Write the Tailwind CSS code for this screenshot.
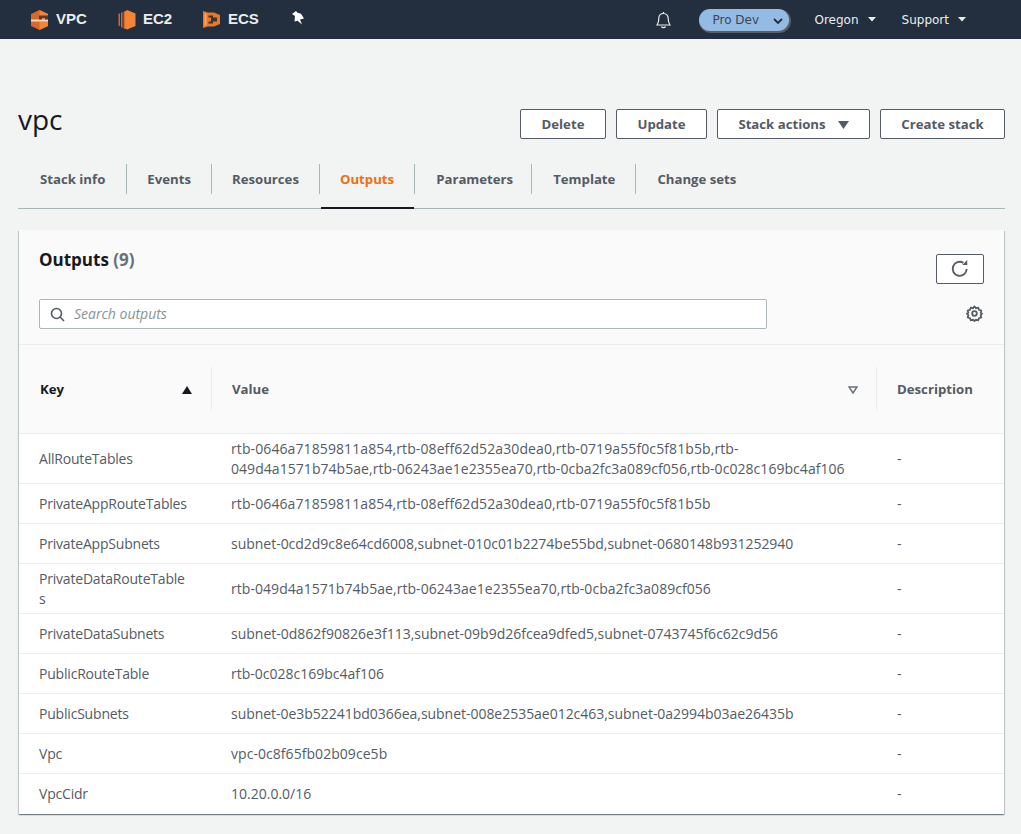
<!DOCTYPE html>
<html lang="en">
<head>
    <meta charset="UTF-8">
    <title>vpc - Outputs</title>
    <script src="https://cdn.jsdelivr.net/npm/@tailwindcss/browser@4"></script>
</head>
<body class="h-[834px] overflow-hidden bg-[#f2f3f3] font-['Open_Sans',sans-serif] text-[14px] text-[#545b64]">
    <!-- top nav -->
    <nav class="h-[39px] bg-[#232f3e] flex items-center pl-[31px] pr-[55px] font-['Liberation_Sans',sans-serif]">
        <a class="flex items-center gap-[8px] font-bold text-[15px] text-[#eaeded] w-[87px]">
            <svg width="17" height="20" viewBox="0 0 17 20"><path d="M8.500 0 17 4V16L8.500 20 0 16V4Z" fill="#d9672a"/><path d="M8.500 0 17 4V9.500H8.500ZM8.500 11.500H17V16L8.500 20Z" fill="#f58536"/><path d="M0 9.500H17V11.500H0Z" fill="#f8d9bd"/><path d="M8 9.500V5.500H17V9.500H14V8H11V9.500Z" fill="#4a3f3c"/></svg>
            VPC
        </a>
        <a class="flex items-center gap-[7px] font-bold text-[15px] text-[#eaeded] w-[85px]">
            <svg width="18" height="20" viewBox="0 0 18 20"><path d="M7 1.500 9 0 17.500 3.500V16L9 19.500 7 18.500Z" fill="#f58536"/><path d="M.5 4 2 3.300V16.300L.5 15.500ZM3 2.800 4.500 2V18L3 17ZM5.500 1.700 7 1V19L5.500 18.300Z" fill="#d9672a"/></svg>
            EC2
        </a>
        <a class="flex items-center gap-[8px] font-bold text-[15px] text-[#eaeded] w-[89px]">
            <svg width="17" height="17" viewBox="0 0 17 17"><path d="M0 0 5 1.500H11L17 4V13L11 15.500 5 15.500 0 17Z" fill="#e8782a"/><path d="M1.500 2.500H3.500V14.500H1.500Z" fill="#f6a96b"/><path d="M5.500 4.500H10V6.500H14V10.500H10V12.500H5.500V10.500H8V6.500H5.500Z" fill="#3b3431"/></svg>
            ECS
        </a>
        <svg width="12" height="14" viewBox="0 0 12 14" class="-mt-[4px]"><path d="M0 3 4 0 5.500 1.700 9 2.800 12 7.500 8 8.500 10 13.500 5.500 9.800 2.500 10.500 3 5Z" fill="#fff"/></svg>
        <span class="ml-auto flex items-center">
            <svg width="17" height="18" viewBox="0 0 17 18" fill="none" stroke="#eaeded" stroke-width="1.200" class="mr-[27px]"><path d="M2 14C3.500 12 3.800 10.500 3.800 7.500 3.800 4.500 5.800 2.500 8.500 2.500S13.200 4.500 13.200 7.500C13.200 10.500 13.500 12 15 14Z"/><path d="M8.500 1V2.500M6.500 15.500C7 17 10 17 10.500 15.500"/></svg>
            <span class="w-[90px] h-[22px] rounded-full bg-[#94bbe4] shadow-[1px_1px_0_1px_#5a5f66] flex items-center pl-[14px] font-['DejaVu_Sans',sans-serif] text-[12px] text-[#3b4654] relative mr-[26px]">
                Pro Dev
                <svg width="10" height="6" viewBox="0 0 10 6" fill="none" stroke="#232f3e" stroke-width="1.800" class="absolute right-[6px] top-[9px]"><path d="M1 1 5 5 9 1"/></svg>
            </span>
            <span class="flex items-center gap-[9px] font-['DejaVu_Sans',sans-serif] text-[12px] text-[#eaeded] mr-[26px]">Oregon
                <svg width="8" height="5" viewBox="0 0 8 5" fill="#eaeded"><path d="M0 0H8L4 4.500Z"/></svg></span>
            <span class="flex items-center gap-[9px] font-['DejaVu_Sans',sans-serif] text-[12px] text-[#eaeded]">Support
                <svg width="8" height="5" viewBox="0 0 8 5" fill="#eaeded"><path d="M0 0H8L4 4.500Z"/></svg></span>
        </span>
    </nav>

    <main class="pl-[18px] pr-[16px]">
        <!-- title and actions -->
        <div class="flex items-start justify-between pt-[70px] h-[125px]">
            <h1 class="text-[28px] leading-[36px] text-[#16191f] -mt-[8px]">vpc</h1>
            <div class="flex gap-[10px] font-bold text-[13.2px]">
                <button class="h-[30px] w-[86px] pt-[1px] rounded-[2px] border border-[#545b64] bg-white">Delete</button>
                <button class="h-[30px] w-[91px] pt-[1px] rounded-[2px] border border-[#545b64] bg-white">Update</button>
                <button class="h-[30px] w-[153px] pt-[1px] rounded-[2px] border border-[#545b64] bg-white flex items-center justify-center gap-[12px]">Stack actions
                    <svg width="11" height="8" viewBox="0 0 11 8" fill="#545b64"><path d="M0 0H11L5.500 8Z"/></svg></button>
                <button class="h-[30px] w-[125px] pt-[1px] rounded-[2px] border border-[#545b64] bg-white">Create stack</button>
            </div>
        </div>

        <!-- tabs -->
        <div class="flex h-[45px] items-start border-b border-[#aab7b8] font-bold text-[13.2px]">
            <a class="h-[30px] pt-[1px] flex items-center pl-[22px] pr-[21px] border-r border-[#aab7b8]">Stack info</a>
            <a class="h-[30px] pt-[1px] flex items-center px-[20px] border-r border-[#aab7b8]">Events</a>
            <a class="h-[30px] pt-[1px] flex items-center px-[20px] border-r border-[#aab7b8]">Resources</a>
            <a class="h-[44px] relative text-[#ec7211]"><span class="h-[30px] pt-[1px] flex items-center px-[20px]">Outputs</span><span class="absolute left-[1px] right-0 bottom-[-1px] h-[2px] bg-[#16191f]"></span></a>
            <a class="h-[30px] pt-[1px] flex items-center pl-[21px] pr-[18px] border-x border-[#aab7b8]">Parameters</a>
            <a class="h-[30px] pt-[1px] flex items-center pl-[21px] pr-[20px] border-r border-[#aab7b8]">Template</a>
            <a class="h-[30px] pt-[1px] flex items-center px-[21px]">Change sets</a>
        </div>

        <!-- outputs card -->
        <section class="mt-[21px] ml-[1px] mr-[1px] bg-white shadow-[0_1px_1px_0_rgba(0,28,36,.35),1px_1px_1px_0_rgba(0,28,36,.15),-1px_1px_1px_0_rgba(0,28,36,.15)]">
            <div class="h-[115px] bg-[#fafafa] border-b border-[#eaeded] px-[20px] relative">
                <h2 class="pt-[17px] text-[17px] leading-[26px] font-bold text-[#16191f]">Outputs <span class="text-[#687078]">(9)</span></h2>
                <button class="absolute right-[20px] top-[24px] h-[30px] w-[48px] rounded-[2px] border border-[#545b64] bg-white flex items-center justify-center">
                    <svg width="20" height="20" viewBox="0 0 18 18" fill="none" stroke="#545b64" stroke-width="1.700"><path d="M15 9A6.300 6.300 0 1 1 12 3.500"/><path d="M15.500 1V5.500H11" fill="#545b64" stroke="none"/></svg>
                </button>
                <div class="absolute left-[20px] top-[69px] w-[728px] h-[30px] rounded-[2px] border border-[#aab7b8] bg-white flex items-center pl-[10px] gap-[9px]">
                    <svg width="15" height="15" viewBox="0 0 15 15" fill="none" stroke="#545b64" stroke-width="1.600"><circle cx="6.500" cy="6.500" r="5"/><path d="M10 10 14 14"/></svg>
                    <span class="italic text-[#879596] -mt-[2px]">Search outputs</span>
                </div>
                <svg width="17" height="17" viewBox="0 0 17 17" fill="none" stroke="#545b64" stroke-width="1.800" class="absolute right-[21px] top-[75px]"><path d="M8.500 1.500 10 3.200 12.200 2.700 13 4.800 15.200 5.500 14.700 7.700 16 8.500 14.700 10.300 15.200 12.500 13 13.200 12.200 15.300 10 14.800 8.500 16 7 14.800 4.800 15.300 4 13.200 1.800 12.500 2.300 10.300 1 8.500 2.300 7.700 1.800 5.500 4 4.800 4.800 2.700 7 3.200Z"/><circle cx="8.500" cy="8.500" r="2.300"/></svg>
            </div>

            <div class="grid grid-cols-[193px_665px_1fr]">
                <!-- header -->
                <div class="h-[89px] pt-[1px] bg-[#fafafa] border-b border-[#eaeded] flex items-center pl-[21px] pr-[20px] justify-between relative font-bold text-[13.2px] text-[#16191f]">Key
                    <svg width="10" height="8" viewBox="0 0 10 8" fill="#16191f"><path d="M0 8H10L5 0Z"/></svg>
                    <span class="absolute right-0 top-[22px] h-[44px] w-px bg-[#eaeded]"></span>
                </div>
                <div class="h-[89px] pt-[1px] bg-[#fafafa] border-b border-[#eaeded] flex items-center pl-[20px] pr-[19px] justify-between relative font-bold text-[13.2px]">Value
                    <svg width="10" height="8" viewBox="0 0 10 8" fill="none" stroke="#687078" stroke-width="1.500"><path d="M1 1H9L5 7Z"/></svg>
                    <span class="absolute right-0 top-[22px] h-[44px] w-px bg-[#eaeded]"></span>
                </div>
                <div class="h-[89px] pt-[1px] bg-[#fafafa] border-b border-[#eaeded] flex items-center pl-[20px] font-bold text-[13.2px]">Description</div>

                <!-- rows -->
                <div class="h-[50px] border-b border-[#eaeded] flex items-center pl-[20px] tracking-[-.2px]">AllRouteTables</div>
                <div class="h-[50px] border-b border-[#eaeded] flex items-center pl-[19px] leading-[20px]"><span><span class="tracking-[.1px]">rtb-0646a71859811a854,rtb-08eff62d52a30dea0,rtb-0719a55f0c5f81b5b,rtb-</span><br><span class="tracking-[.05px]">049d4a1571b74b5ae,rtb-06243ae1e2355ea70,rtb-0cba2fc3a089cf056,rtb-0c028c169bc4af106</span></span></div>
                <div class="h-[50px] border-b border-[#eaeded] flex items-center pl-[20px]">-</div>

                <div class="h-[40px] border-b border-[#eaeded] flex items-center pl-[20px] tracking-[-.2px]">PrivateAppRouteTables</div>
                <div class="h-[40px] border-b border-[#eaeded] flex items-center pl-[19px] tracking-[.1px]">rtb-0646a71859811a854,rtb-08eff62d52a30dea0,rtb-0719a55f0c5f81b5b</div>
                <div class="h-[40px] border-b border-[#eaeded] flex items-center pl-[20px]">-</div>

                <div class="h-[40px] border-b border-[#eaeded] flex items-center pl-[20px] tracking-[-.2px]">PrivateAppSubnets</div>
                <div class="h-[40px] border-b border-[#eaeded] flex items-center pl-[19px] tracking-[-.02px]">subnet-0cd2d9c8e64cd6008,subnet-010c01b2274be55bd,subnet-0680148b931252940</div>
                <div class="h-[40px] border-b border-[#eaeded] flex items-center pl-[20px]">-</div>

                <div class="h-[50px] border-b border-[#eaeded] flex items-center pl-[20px] leading-[20px] tracking-[-.2px]"><span>PrivateDataRouteTable<br>s</span></div>
                <div class="h-[50px] border-b border-[#eaeded] flex items-center pl-[19px] tracking-[.05px]">rtb-049d4a1571b74b5ae,rtb-06243ae1e2355ea70,rtb-0cba2fc3a089cf056</div>
                <div class="h-[50px] border-b border-[#eaeded] flex items-center pl-[20px]">-</div>

                <div class="h-[40px] border-b border-[#eaeded] flex items-center pl-[20px] tracking-[-.2px]">PrivateDataSubnets</div>
                <div class="h-[40px] border-b border-[#eaeded] flex items-center pl-[19px]">subnet-0d862f90826e3f113,subnet-09b9d26fcea9dfed5,subnet-0743745f6c62c9d56</div>
                <div class="h-[40px] border-b border-[#eaeded] flex items-center pl-[20px]">-</div>

                <div class="h-[40px] border-b border-[#eaeded] flex items-center pl-[20px] tracking-[-.2px]">PublicRouteTable</div>
                <div class="h-[40px] border-b border-[#eaeded] flex items-center pl-[19px]">rtb-0c028c169bc4af106</div>
                <div class="h-[40px] border-b border-[#eaeded] flex items-center pl-[20px]">-</div>

                <div class="h-[40px] border-b border-[#eaeded] flex items-center pl-[20px] tracking-[-.2px]">PublicSubnets</div>
                <div class="h-[40px] border-b border-[#eaeded] flex items-center pl-[19px] tracking-[-.03px]">subnet-0e3b52241bd0366ea,subnet-008e2535ae012c463,subnet-0a2994b03ae26435b</div>
                <div class="h-[40px] border-b border-[#eaeded] flex items-center pl-[20px]">-</div>

                <div class="h-[40px] border-b border-[#eaeded] flex items-center pl-[20px] tracking-[-.2px]">Vpc</div>
                <div class="h-[40px] border-b border-[#eaeded] flex items-center pl-[19px] tracking-[.05px]">vpc-0c8f65fb02b09ce5b</div>
                <div class="h-[40px] border-b border-[#eaeded] flex items-center pl-[20px]">-</div>

                <div class="h-[40px] pb-[1px] flex items-center pl-[20px] tracking-[-.2px]">VpcCidr</div>
                <div class="h-[40px] pb-[1px] flex items-center pl-[19px]">10.20.0.0/16</div>
                <div class="h-[40px] pb-[1px] flex items-center pl-[20px]">-</div>
            </div>
        </section>
    </main>
</body>
</html>
